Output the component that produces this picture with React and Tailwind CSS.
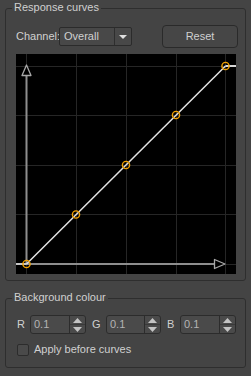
import React from "react";

function SpinBox({ value, width }) {
  return (
    <div className={`flex h-[19px] rounded-[3px] border border-[#2c2c2c] bg-[#4a4a4a] ${width}`}>
      <div className="flex flex-1 items-center pl-[3px] text-[#b4b4b4]">{value}</div>
      <div className="flex w-[16px] flex-col border-l border-[#2c2c2c]">
        <div className="flex flex-1 items-center justify-center border-b border-[#3a3a3a]">
          <svg width="9" height="5" viewBox="0 0 9 5"><path d="M0 5 L4.5 0 L9 5 Z" fill="#c4c4c4" /></svg>
        </div>
        <div className="flex flex-1 items-center justify-center">
          <svg width="9" height="5" viewBox="0 0 9 5"><path d="M0 0 L4.5 5 L9 0 Z" fill="#c4c4c4" /></svg>
        </div>
      </div>
    </div>
  );
}

function Plot() {
  const grid = "#262626";
  const axis = "#8e8e8e";
  const xs = [10.5, 60.5, 110.5, 160.5, 209.5];
  const ys = [12.5, 61.5, 111.5, 160.5, 210.5];
  const pts = [
    [10.5, 210],
    [60, 160.5],
    [110, 111],
    [160, 61],
    [209.5, 12],
  ];
  return (
    <div className="ml-[10px] mt-[6px] h-[220px] w-[220px] bg-black">
      <svg width="220" height="220" viewBox="0 0 220 220">
        {xs.map((x) => (
          <line key={"v" + x} x1={x} y1="0" x2={x} y2="220" stroke={grid} strokeWidth="1" />
        ))}
        {ys.map((y) => (
          <line key={"h" + y} x1="0" y1={y} x2="220" y2={y} stroke={grid} strokeWidth="1" />
        ))}
        {/* axes */}
        <line x1="10.5" y1="211" x2="10.5" y2="22" stroke={axis} strokeWidth="2" />
        <path d="M10.5 11 L15 21.5 L6 21.5 Z" fill="black" stroke="#a8a8a8" strokeWidth="1.3" strokeLinejoin="round" />
        <line x1="0" y1="210" x2="198" y2="210" stroke={axis} strokeWidth="2" />
        <path d="M209 210 L198.5 205.5 L198.5 214.5 Z" fill="black" stroke="#a8a8a8" strokeWidth="1.3" strokeLinejoin="round" />
        {/* curve */}
        <line x1="0" y1="210" x2="10.5" y2="210" stroke="#d8d8d8" strokeWidth="1.5" />
        <line x1="10.5" y1="210" x2="209.5" y2="12" stroke="#e4e4e4" strokeWidth="1.5" />
        <line x1="209.5" y1="12" x2="220" y2="12" stroke="#d8d8d8" strokeWidth="2" />
        {pts.map(([x, y], i) => (
          <circle key={i} cx={x} cy={y} r="3.6" fill="none" stroke="#f0a000" strokeWidth="1.4" />
        ))}
      </svg>
    </div>
  );
}

export default function App() {
  return (
    <div
      className="h-[376px] w-[251px] overflow-hidden bg-[#444444] text-[11px] leading-[13px] text-[#d0d0d0]"
      style={{ fontFamily: '"Liberation Sans", Arial, sans-serif' }}
    >
      <div className="h-[8px]" />
      {/* Response curves group */}
      <div className="relative mx-[5px] h-[273px] rounded-[3px] border border-[#2e2e2e] pt-[16px]">
        <span className="absolute left-[6px] top-[-8px] bg-[#444444] px-[2px]">Response curves</span>
        <div className="flex h-[23px] items-center pl-[10px] pr-[7px]">
          <span className="w-[43px]">Channel:</span>
          <div className="flex h-[19px] w-[73px] rounded-[2px] border border-[#2b2b2b] bg-[#484848]">
            <div className="flex flex-1 items-center pl-[4px]">Overall</div>
            <div className="flex w-[17px] items-center justify-center border-l border-[#2e2e2e]">
              <svg width="8" height="4" viewBox="0 0 8 4"><path d="M0 0 L8 0 L4 4 Z" fill="#e0e0e0" /></svg>
            </div>
          </div>
          <div className="ml-auto flex h-[23px] w-[76px] items-center justify-center rounded-[4px] border border-[#2a2a2a] bg-[#464646]">
            Reset
          </div>
        </div>
        <Plot />
      </div>
      {/* Background colour group */}
      <div className="relative mx-[5px] mt-[17px] h-[70px] rounded-[3px] border border-[#2e2e2e] pt-[16px]">
        <span className="absolute left-[6px] top-[-8px] bg-[#444444] px-[2px]">Background colour</span>
        <div className="flex h-[19px] items-center pl-[11px]">
          <span className="w-[13px]">R</span>
          <SpinBox value="0.1" width="w-[56px]" />
          <span className="ml-[6px] w-[14px]">G</span>
          <SpinBox value="0.1" width="w-[55px]" />
          <span className="ml-[6px] w-[13px]">B</span>
          <SpinBox value="0.1" width="w-[56px]" />
        </div>
        <div className="mt-[9px] flex h-[13px] items-center pl-[11px]">
          <div className="h-[12px] w-[12px] rounded-[2px] border border-[#2c2c2c] bg-[#4a4a4a]" />
          <span className="ml-[5px]">Apply before curves</span>
        </div>
      </div>
    </div>
  );
}
